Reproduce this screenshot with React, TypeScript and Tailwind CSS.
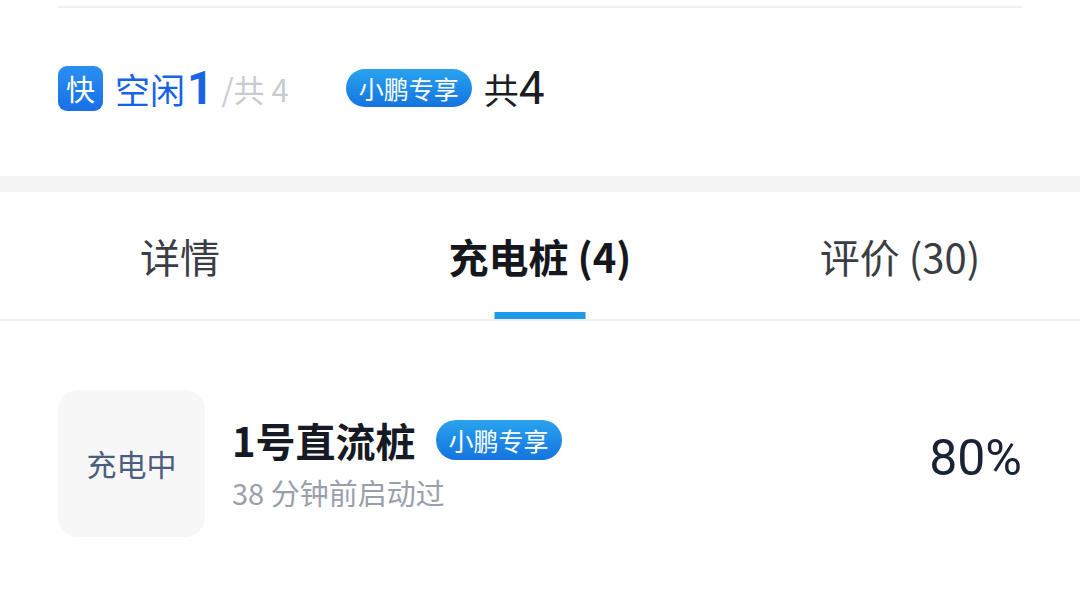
const font = "font-['Noto_Sans_CJK_SC','Noto_Sans',sans-serif]";

function XpengTag({ className = "" }: { className?: string }) {
  return (
    <span
      className={`inline-flex items-center justify-center rounded-full bg-gradient-to-b from-[#2aa3ee] to-[#1673e0] text-white text-[25px] leading-none ${className}`}
    >
      小鹏专享
    </span>
  );
}

function Tab({ label, active }: { label: string; active?: boolean }) {
  return (
    <div className="relative flex items-center justify-center">
      <span
        className={
          active
            ? "text-[40px] font-bold text-[#15171c]"
            : "text-[40px] text-[#3a3d44]"
        }
      >
        {label}
      </span>
      {active && (
        <div className="absolute bottom-0 left-1/2 -translate-x-1/2 w-[91px] h-[7px] bg-[#1d9be8]" />
      )}
    </div>
  );
}

export default function App() {
  return (
    <div className={`w-[1080px] h-[608px] bg-white overflow-hidden ${font}`}>
      {/* summary */}
      <div className="px-[58px] pt-[6px]">
        <div className="h-[2px] bg-[#f0f0f2]" />
        <div className="flex items-center h-[168px] pb-[8px]">
          <span className="w-[45px] h-[45px] rounded-[9px] bg-gradient-to-b from-[#2a8ff0] to-[#1a6fe6] text-white text-[29px] flex items-center justify-center leading-none">
            快
          </span>
          <span className="ml-[12px] text-[35px] text-[#1664e4] leading-none">空闲</span>
          <span className="ml-[2px] text-[46px] font-bold text-[#1664e4] leading-none font-['Roboto',sans-serif]">
            1
          </span>
          <span className="ml-[8px] text-[31px] text-[#c8cbd1] leading-none">/共 4</span>
          <XpengTag className="ml-[57px] w-[126px] h-[38px]" />
          <span className="ml-[12px] text-[35px] text-[#1a1d24] leading-none">
            共<span className="text-[46px] font-['Roboto',sans-serif]">4</span>
          </span>
        </div>
      </div>

      <div className="h-[16px] bg-[#f4f4f5]" />

      {/* tabs */}
      <div className="grid grid-cols-3 h-[129px] border-b-2 border-[#f0f0f2]">
        <Tab label="详情" />
        <Tab label="充电桩 (4)" active />
        <Tab label="评价 (30)" />
      </div>

      {/* pile item */}
      <div className="flex items-center px-[58px] pt-[69px]">
        <div className="w-[147px] h-[147px] rounded-[20px] bg-[#f7f7f8] flex items-center justify-center">
          <span className="text-[30px] text-[#4c5e80]">充电中</span>
        </div>
        <div className="ml-[27px] flex-1 flex flex-col">
          <div className="flex items-center">
            <span className="text-[40px] font-bold text-[#161a24] leading-none">1号直流桩</span>
            <XpengTag className="ml-[20px] w-[126px] h-[40px]" />
          </div>
          <span className="mt-[18px] text-[29px] text-[#9aa0ab] leading-none">38 分钟前启动过</span>
        </div>
        <span className="pb-[12px] text-[50px] text-[#1a2235] font-['Roboto',sans-serif] leading-none">
          80%
        </span>
      </div>
    </div>
  );
}
